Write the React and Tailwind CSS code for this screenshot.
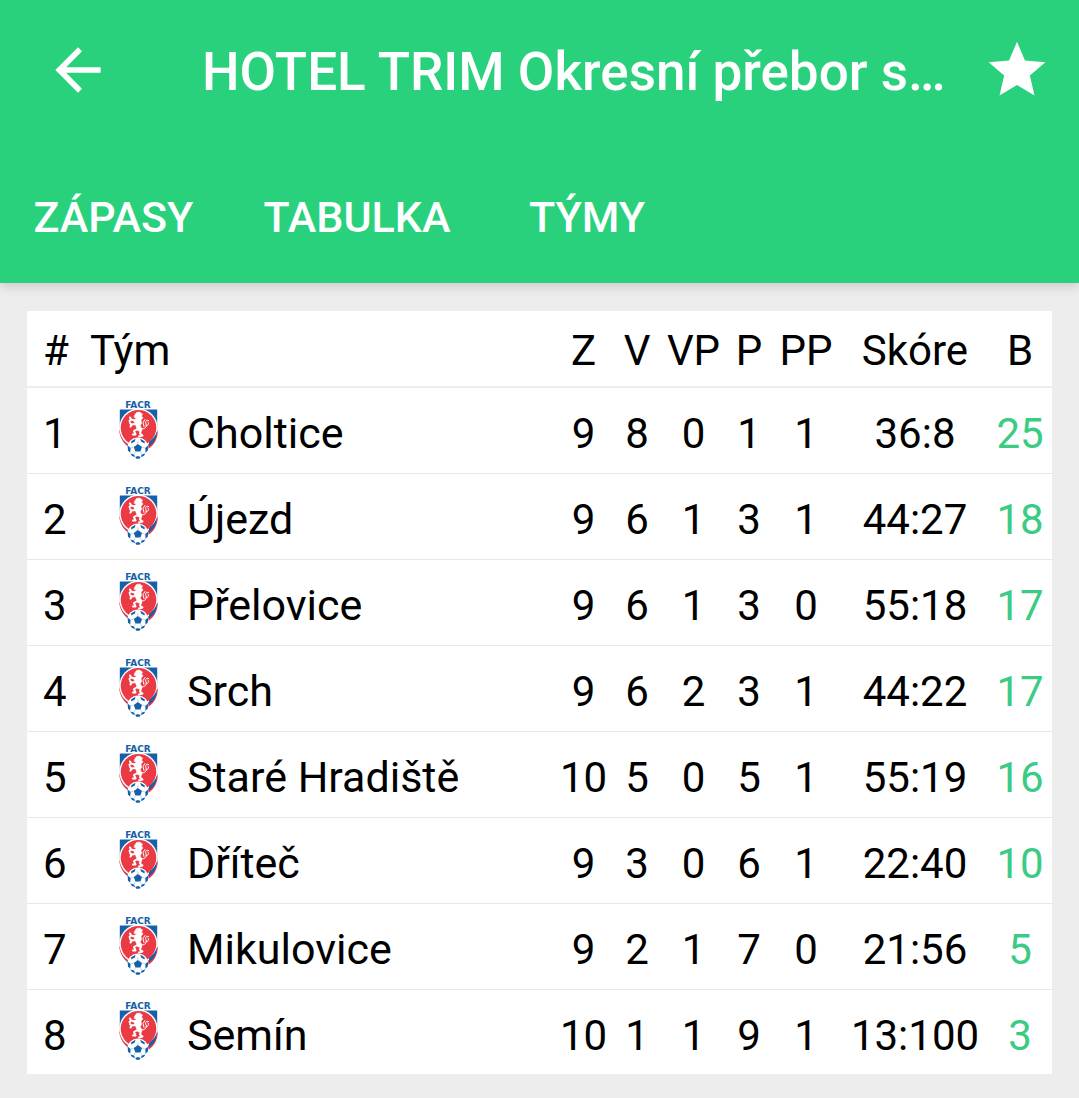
import { useState } from 'react'

const TABS = [
  { label: 'ZÁPASY', width: 'w-[227px]' },
  { label: 'TABULKA', width: 'w-[260px]' },
  { label: 'TÝMY', width: 'w-[200px]' },
]

const TEAMS = [
  { name: 'Choltice',       z: 9,  v: 8, vp: 0, p: 1, pp: 1, score: '36:8',   points: 25 },
  { name: 'Újezd',          z: 9,  v: 6, vp: 1, p: 3, pp: 1, score: '44:27',  points: 18 },
  { name: 'Přelovice',      z: 9,  v: 6, vp: 1, p: 3, pp: 0, score: '55:18',  points: 17 },
  { name: 'Srch',           z: 9,  v: 6, vp: 2, p: 3, pp: 1, score: '44:22',  points: 17 },
  { name: 'Staré Hradiště', z: 10, v: 5, vp: 0, p: 5, pp: 1, score: '55:19',  points: 16 },
  { name: 'Dříteč',         z: 9,  v: 3, vp: 0, p: 6, pp: 1, score: '22:40',  points: 10 },
  { name: 'Mikulovice',     z: 9,  v: 2, vp: 1, p: 7, pp: 0, score: '21:56',  points: 5 },
  { name: 'Semín',          z: 10, v: 1, vp: 1, p: 9, pp: 1, score: '13:100', points: 3 },
]

// Znak FAČR: štít, lev a míč
const Crest = () => (
  <svg viewBox="0 0 39 57" className="mx-auto h-[57px] w-[39px] overflow-visible" aria-hidden="true">
    <text x="19" y="6" textAnchor="middle" fontFamily="DejaVu Sans" fontWeight="700" fontSize="9" fill="#1560a8">FACR</text>
    {/* štít */}
    <path d="M0.8 7.5H38.2V27C38.5 38 32 45 19.5 51C7 45 0.5 38 0.8 27Z" fill="#1560a8" />
    <path d="M39 27C39 38 34 45 27 48L28 43C33 40 36 36 39 27Z" fill="#e8384a" />
    <path d="M0 27C0.5 35 4 40 9 44L10 42C5 38 2 33 0 27Z" fill="#e8384a" />
    <circle cx="19.5" cy="25.8" r="19.2" fill="#fff" />
    <path d="M30 40C34 37 37 33 38 29C38 36 35 41 30 44.5Z" fill="#1560a8" />
    <circle cx="19.5" cy="25.8" r="17.8" fill="#ea3a44" />
    {/* lev */}
    <g fill="#fff" stroke="#fff" strokeLinecap="round" strokeLinejoin="round">
      <path d="M15.5 13.5L17.5 10.5L20.5 10L23.5 12L22.5 14L24 16L22 18L22.5 21.5L21 24L23 26.5L22 29.5L18.5 28.5L17.5 25.5L16 21.5L14.5 18.5L17.5 16L15.5 15.5Z" strokeWidth="0.6" />
      <path d="M16 18.5L12 17.5L11 15.5M12 17.5L10.5 19M16.5 22L12.5 22.5L11 21M12.5 22.5L11.5 24.5M18.5 27L15 29L16.5 32.5L14 32.5M22 28L21 31.5L23.5 33.5L20 34.5" fill="none" strokeWidth="2" />
      <path d="M21.5 27C25.5 27.5 28.5 25 27 22C26 19.5 27 17.5 29.5 18.5M27 23.5C29.5 24 30 21.5 29 20M25 24.5L24 20.5L26 17.5" fill="none" strokeWidth="1" />
    </g>
    {/* míč */}
    <circle cx="18.9" cy="46" r="10.6" fill="#fff" />
    <g fill="#1560a8">
      <path d="M18.9 42L23 45L21.4 49.5H16.4L14.8 45Z" />
      <path d="M12.2 39.2L16.5 36.8L15.8 39.4L12.2 41.6Z" />
      <path d="M25.6 39.2L21.3 36.8L22 39.4L25.6 41.6Z" />
      <path d="M8.6 43.5L11.6 46L11.2 50.8L9 48.5Z" />
      <path d="M29.2 43.5L26.2 46L26.6 50.8L28.8 48.5Z" />
      <path d="M11.4 51.4L15 52.6L16.2 55L13 54Z" />
      <path d="M26.4 51.4L22.8 52.6L21.6 55L24.8 54Z" />
      <path d="M16.3 55L18.9 54L21.5 55L20.6 56.8H17.2Z" />
    </g>
    <path d="M18.9 42V39M14.8 45L11.6 46M23 45L26.2 46M16.4 49.5L15 52.6M21.4 49.5L22.8 52.6" fill="none" stroke="#a9c5e2" strokeWidth="0.7" />
  </svg>
)

const App = () => {
  const [favorite, setFavorite] = useState(true)

  return (
    <div className="min-h-screen bg-[#ededed] font-[Roboto,sans-serif] text-black">
      {/* Header */}
      <header className="relative bg-[#29d17d] text-white shadow-[0_2px_12px_rgba(0,0,0,0.18)]">
        <div className="flex h-[140px] items-center pr-7 pl-11">
          <button type="button" aria-label="Zpět" className="shrink-0">
            <svg viewBox="0 0 24 24" className="h-[68px] w-[68px]" fill="currentColor">
              <path d="M20 11H7.83l5.59-5.59L12 4l-8 8 8 8 1.41-1.41L7.83 13H20v-2z" />
            </svg>
          </button>
          <h1 className="ml-[90px] min-w-0 flex-1 truncate pt-1 text-[53px] leading-[70px] font-medium">
            HOTEL TRIM Okresní přebor s…
          </h1>
          <button
            type="button"
            aria-label="Oblíbené"
            aria-pressed={favorite}
            onClick={() => setFavorite(!favorite)}
            className="shrink-0"
          >
            <svg viewBox="0 0 24 24" className="h-[68px] w-[68px]" fill={favorite ? 'currentColor' : 'none'} stroke={favorite ? 'none' : 'currentColor'}>
              <path d="M12 17.27L18.18 21l-1.64-7.03L22 9.24l-7.19-.61L12 2 9.19 8.63 2 9.24l5.46 4.73L5.82 21z" />
            </svg>
          </button>
        </div>

        <nav className="flex pt-3">
          {TABS.map((t) => (
            <a key={t.label} href="#" className={`${t.width} py-[30px] text-center text-[43px] leading-[71px] font-medium`}>
              {t.label}
            </a>
          ))}
        </nav>
      </header>

      {/* Tabulka */}
      <main className="px-[27px] pt-7 pb-6">
        <table className="w-full table-fixed border-collapse bg-white text-center text-[42px] leading-[50px]">
          <colgroup>
            <col className="w-[63px]" />
            <col className="w-[97px]" />
            <col />
            <col className="w-[63px]" />
            <col className="w-[44px]" />
            <col className="w-[69px]" />
            <col className="w-[42px]" />
            <col className="w-[72px]" />
            <col className="w-[146px]" />
            <col className="w-[64px]" />
          </colgroup>
          <thead>
            <tr className="h-[76px] border-b-2 border-[#ededed] *:pt-1 *:font-normal">
              <th className="pl-4 text-left">#</th>
              <th colSpan={2} className="text-left">Tým</th>
              <th>Z</th>
              <th>V</th>
              <th>VP</th>
              <th>P</th>
              <th>PP</th>
              <th>Skóre</th>
              <th>B</th>
            </tr>
          </thead>
          <tbody>
            {TEAMS.map((t, i) => (
              <tr key={t.name} className="h-[86px] border-b border-[#e8e8e8] last:h-[85px] last:border-b-0">
                <td className="pt-2 pl-4 text-left">{i + 1}</td>
                <td><Crest /></td>
                <td className="truncate pt-1.5 text-left text-[43px]">{t.name}</td>
                <td className="pt-2">{t.z}</td>
                <td className="pt-2">{t.v}</td>
                <td className="pt-2">{t.vp}</td>
                <td className="pt-2">{t.p}</td>
                <td className="pt-2">{t.pp}</td>
                <td className="pt-2">{t.score}</td>
                <td className="pt-2 text-[#3ccb84]">{t.points}</td>
              </tr>
            ))}
          </tbody>
        </table>
      </main>
    </div>
  )
}

export default App
